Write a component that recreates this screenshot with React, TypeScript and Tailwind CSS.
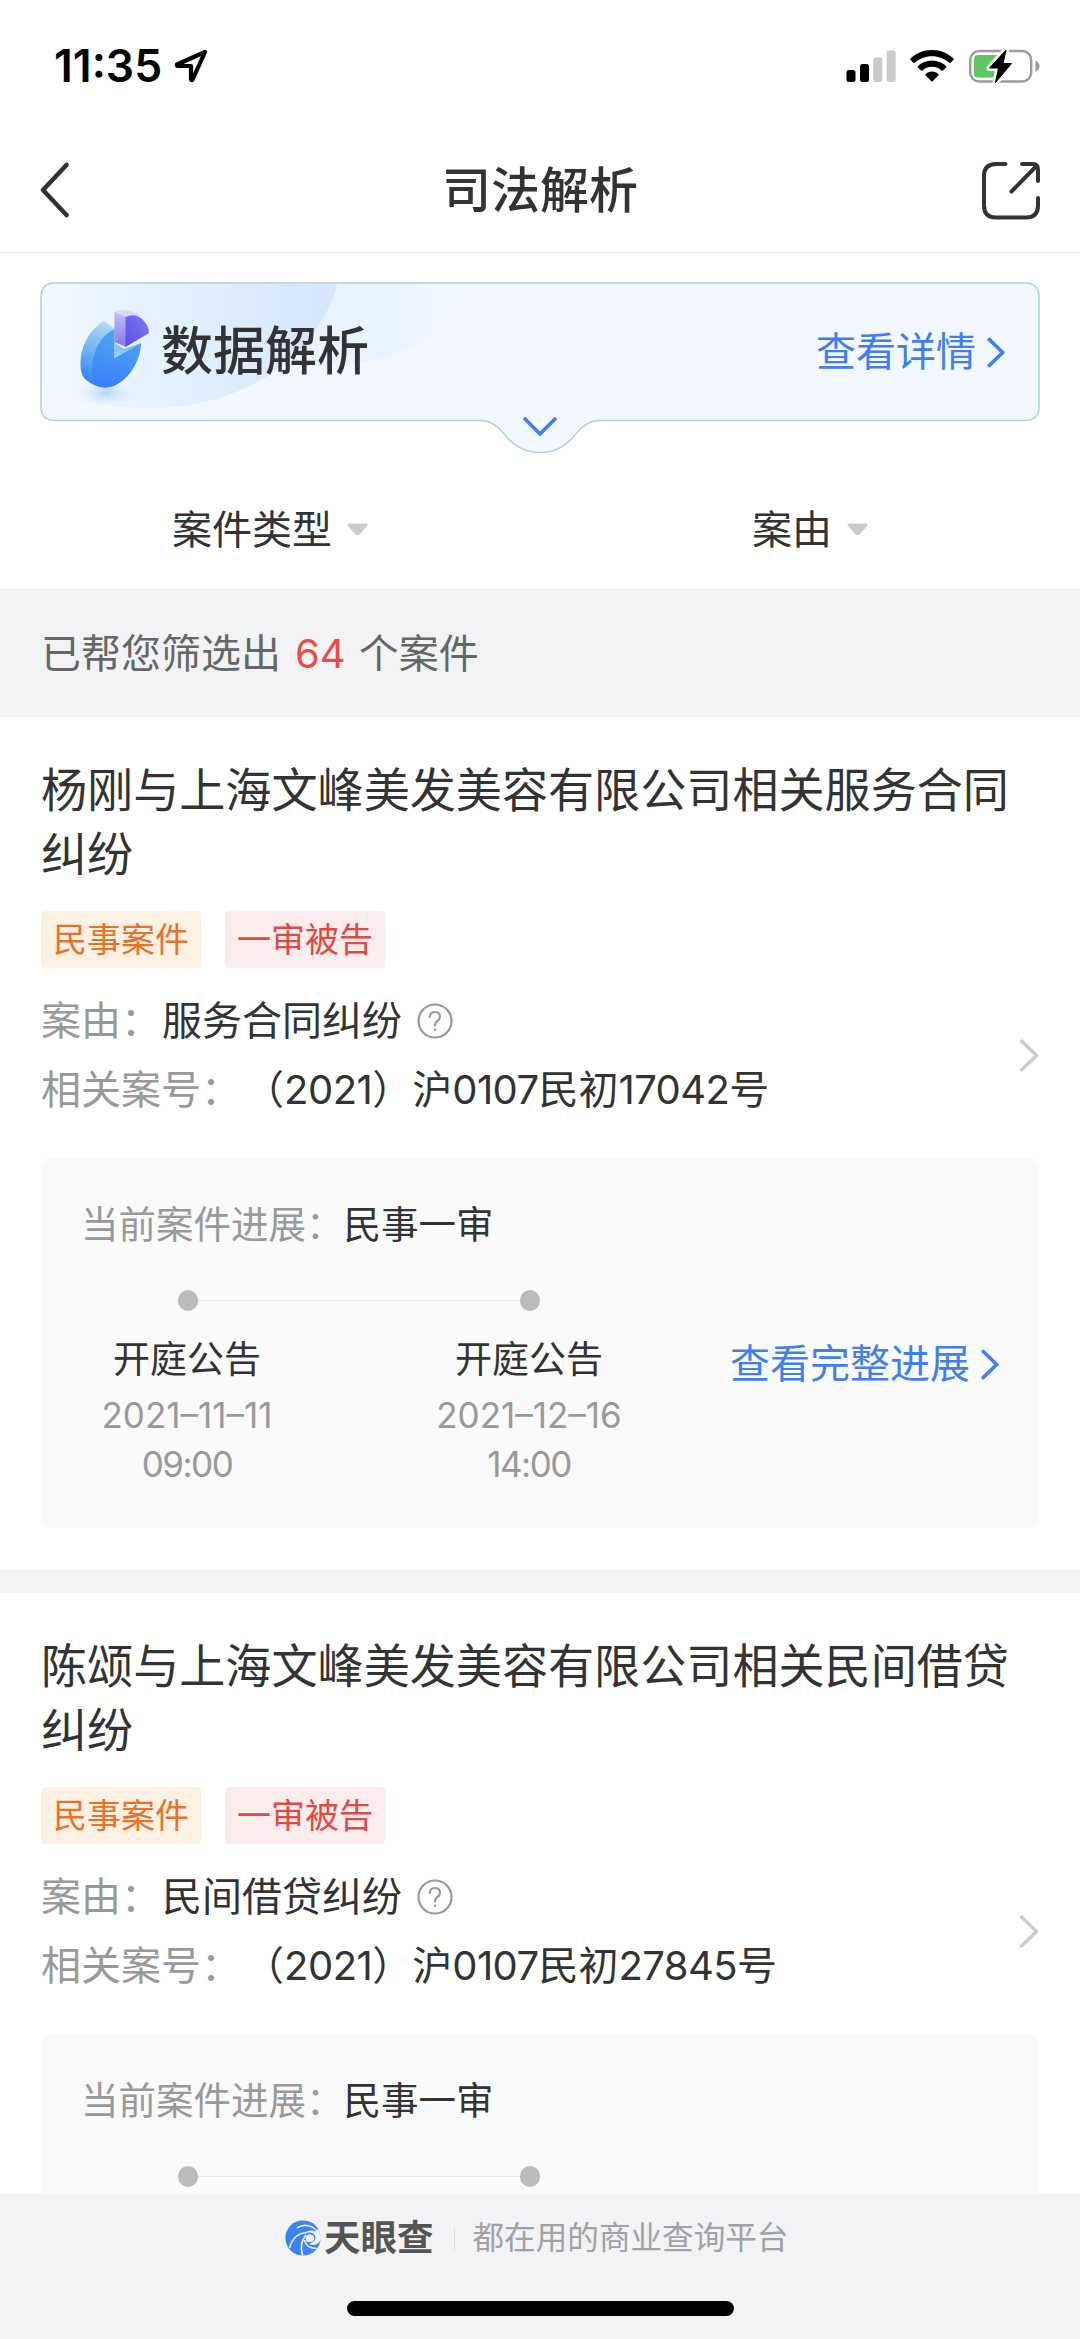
import React from "react";

type Step = { label: string; date: string; time: string };
type Case = { title: string; reason: string; number: [string, string, string, string, string]; steps: Step[] };

const cases: Case[] = [
  {
    title: "杨刚与上海文峰美发美容有限公司相关服务合同纠纷",
    reason: "服务合同纠纷",
    number: ["2021", "沪", "0107", "民初", "17042"],
    steps: [
      { label: "开庭公告", date: "2021–11–11", time: "09:00" },
      { label: "开庭公告", date: "2021–12–16", time: "14:00" },
    ],
  },
  {
    title: "陈颂与上海文峰美发美容有限公司相关民间借贷纠纷",
    reason: "民间借贷纠纷",
    number: ["2021", "沪", "0107", "民初", "27845"],
    steps: [],
  },
];

function Chevron({ className, width = 4 }: { className: string; width?: number }) {
  return (
    <svg viewBox="0 0 20 34" className={className} fill="none" stroke="currentColor" strokeWidth={width} strokeLinecap="round" strokeLinejoin="round">
      <path d="M2.5 2.5 L17.5 17 L2.5 31.5" />
    </svg>
  );
}

function StatusBar() {
  return (
    <div className="flex h-[132px] items-center justify-between pl-[54px] pr-[39px]">
      <div className="flex items-center gap-[12px]">
        <span className="text-[44.500px] font-semibold leading-[44px] text-black">11:35</span>
        <svg viewBox="0 0 34 34" className="h-[34px] w-[34px]" fill="none" stroke="#000" strokeWidth="4.2" strokeLinejoin="round">
          <path d="M31 3 L3 15.5 Q2.5 17 4 17 L17 17 L17 30 Q17.5 32 18.6 30.5 Z" />
        </svg>
      </div>
      <div className="flex items-center">
        <svg viewBox="0 0 50 32" className="h-[32px] w-[50px]">
          <rect x="0.5" y="20" width="9" height="12" rx="2.5" />
          <rect x="14" y="14" width="9" height="18" rx="2.5" />
          <rect x="27.3" y="7.5" width="9" height="24.5" rx="2.5" fill="#cacaca" />
          <rect x="40.7" y="0.5" width="9" height="31.5" rx="2.5" fill="#cacaca" />
        </svg>
        <svg viewBox="0 0 44 32" className="ml-[14px] h-[32px] w-[44px]">
          <path d="M22 0 C30.5 0 38 3.3 43.5 8.6 Q44 9.3 43.4 10 L40.6 12.8 Q40 13.3 39.3 12.8 C34.6 8.6 28.6 6.2 22 6.2 C15.4 6.2 9.4 8.6 4.7 12.8 Q4 13.3 3.4 12.8 L0.6 10 Q0 9.3 0.5 8.6 C6 3.3 13.5 0 22 0 Z" />
          <path d="M22 10.6 C27.5 10.6 32.4 12.7 36 16 Q36.6 16.8 36 17.5 L33 20.4 Q32.3 20.9 31.6 20.4 C29 18.1 25.7 16.8 22 16.8 C18.3 16.8 15 18.1 12.4 20.4 Q11.7 20.9 11 20.4 L8 17.5 Q7.4 16.8 8 16 C11.6 12.7 16.5 10.6 22 10.6 Z" />
          <path d="M22 21.4 C24.5 21.4 26.8 22.3 28.5 23.9 Q29 24.5 28.5 25.2 L22.6 31.2 Q22 31.8 21.4 31.2 L15.5 25.2 Q15 24.5 15.5 23.9 C17.2 22.3 19.5 21.4 22 21.4 Z" />
        </svg>
        <svg viewBox="0 0 72 34" className="ml-[15px] h-[34px] w-[72px]">
          <rect x="1.2" y="2" width="61" height="30.5" rx="9" fill="none" stroke="#9c9c9c" strokeWidth="2.4" />
          <path d="M66.5 11.5 C69.2 12.8 70.5 14.8 70.5 17.2 C70.5 19.6 69.2 21.6 66.5 22.9 Z" fill="#9c9c9c" />
          <rect x="5" y="6" width="27" height="22.5" rx="4" fill="#5fc75f" />
          <path d="M37 1 L20.5 19 L29.5 19 L26.5 33.5 L42.5 14.5 L34 14.5 Z" fill="#000" stroke="#fff" strokeWidth="6" strokeLinejoin="round" />
          <path d="M37 1 L20.5 19 L29.5 19 L26.5 33.5 L42.5 14.5 L34 14.5 Z" fill="#000" stroke="#000" strokeWidth="1" strokeLinejoin="round" />
        </svg>
      </div>
    </div>
  );
}

function NavBar() {
  return (
    <div className="flex h-[121px] items-center justify-between border-b border-[#eeeeee] px-[40px] pb-[6px] pt-[4px]">
      <svg viewBox="0 0 58 58" className="h-[58px] w-[58px]" fill="none" stroke="#333" strokeWidth="4.6" strokeLinecap="round" strokeLinejoin="round">
        <path d="M26.5 3 L3 28 L26.5 53" />
      </svg>
      <h1 className="text-[49px] font-medium leading-[60px] text-[#333]">司法解析</h1>
      <svg viewBox="0 0 58 58" className="h-[58px] w-[58px]" fill="none" stroke="#333" strokeWidth="4" strokeLinecap="round" strokeLinejoin="round">
        <path d="M23.5 2 H14 Q2 2 2 14 V43.500 Q2 55.500 14 55.500 H44 Q56 55.500 56 43.500 V36" />
        <path d="M40 2 H51 Q56 2 56 7.500 V19" />
        <path d="M54.5 4 L29.500 29.500" />
      </svg>
    </div>
  );
}

function PieIcon() {
  return (
    <svg viewBox="0 0 100 120" className="ml-[30px] h-[120px] w-[100px]">
      <defs>
        <linearGradient id="side" x1="0.6" y1="0" x2="0.4" y2="1">
          <stop offset="0" stopColor="#addaf6" />
          <stop offset="0.5" stopColor="#6db2f4" />
          <stop offset="1" stopColor="#2f7df5" />
        </linearGradient>
        <linearGradient id="face" x1="0.6" y1="0" x2="0.4" y2="1">
          <stop offset="0" stopColor="#4fa9f3" />
          <stop offset="1" stopColor="#3a80f8" />
        </linearGradient>
        <linearGradient id="notch" x1="0" y1="1" x2="1" y2="0">
          <stop offset="0" stopColor="#9ad4fb" />
          <stop offset="1" stopColor="#58aef5" />
        </linearGradient>
        <linearGradient id="wedge" x1="0" y1="0" x2="0" y2="1">
          <stop offset="0" stopColor="#c3bdf6" />
          <stop offset="1" stopColor="#8577ee" />
        </linearGradient>
        <linearGradient id="wedgeFace" x1="1" y1="0" x2="0" y2="1">
          <stop offset="0" stopColor="#8878f6" />
          <stop offset="1" stopColor="#5450e4" />
        </linearGradient>
        <radialGradient id="glow">
          <stop offset="0" stopColor="#b5d3fb" />
          <stop offset="1" stopColor="#d5e6fd" stopOpacity="0" />
        </radialGradient>
      </defs>
      <ellipse cx="36" cy="101" rx="26" ry="12" fill="url(#glow)" />
      <path d="M34 29 C20 37 10.500 54 10.500 71 C10.500 82 13 86 19 90 C25 94 29 95.500 36 95.500 L45 37 Z" fill="url(#side)" />
      <path d="M44.500 37 C31 43 22 60 22 78 C22 89 27 95.500 36 95.500 C53 95.500 71 72 71 51 L44.500 66 Z" fill="url(#face)" />
      <path d="M44.500 51 L54 57 L71 51 L44.500 66 Z" fill="url(#notch)" />
      <path d="M44.500 20 Q50 17 58 18.500 Q66 20 70 24 L56 27 Z" fill="#dbd6fa" />
      <path d="M44.500 20 L56 25 V55 L44.500 50 Z" fill="url(#wedge)" />
      <path d="M55.500 25 Q66 20.500 73 28 Q79 34 79 41 L55.500 55 Z" fill="url(#wedgeFace)" />
    </svg>
  );
}

function Banner() {
  const outline =
    "M15 1 H985 Q999 1 999 15 V125 Q999 138.500 985 138.500 H558 Q545 139.500 535 153 Q521 170.500 500 170.500 Q479 170.500 465 153 Q455 139.500 442 138.500 H15 Q1 138.500 1 125 V15 Q1 1 15 1 Z";
  return (
    <div className="relative mx-[40px] mt-[29px] h-[172px]">
      <svg viewBox="0 0 1000 172" className="absolute inset-0 h-full w-full">
        <defs>
          <clipPath id="bannerClip">
            <path d={outline} />
          </clipPath>
          <linearGradient id="big" x1="0" y1="0" x2="1" y2="0">
            <stop offset="0" stopColor="#e6f3fe" stopOpacity="0" />
            <stop offset="0.35" stopColor="#e6f2fe" />
            <stop offset="1" stopColor="#d5e6fd" />
          </linearGradient>
          <linearGradient id="soft" x1="0" y1="0" x2="1" y2="0">
            <stop offset="0" stopColor="#e8f3fe" />
            <stop offset="0.5" stopColor="#eaf4fe" />
            <stop offset="1" stopColor="#f2f8fe" />
          </linearGradient>
        </defs>
        <path d={outline} fill="#f2f8fe" />
        <g clipPath="url(#bannerClip)">
          <path d="M270 0 H445 C420 50 350 84 290 84 H230 Z" fill="url(#soft)" />
          <path d="M0 0 H298 C280 70 210 126 110 126 C80 126 50 122 30 116 L0 110 Z" fill="url(#big)" />
        </g>
        <path d={outline} fill="none" stroke="#b4cfe2" strokeWidth="1.5" />
        <path d="M485 137 L500 152 L515 137" fill="none" stroke="#3f80ee" strokeWidth="3.6" strokeLinecap="round" strokeLinejoin="round" />
      </svg>
      <div className="relative flex h-[140px] items-center">
        <PieIcon />
        <span className="ml-[-9px] text-[52px] font-medium leading-[60px] text-[#333]">数据解析</span>
        <span className="ml-auto text-[40px] leading-[48px] text-[#3f80ee]">查看详情</span>
        <Chevron className="ml-[11px] mr-[35px] h-[31px] w-[18px] text-[#3f80ee]" />
      </div>
    </div>
  );
}

function Triangle() {
  return (
    <svg viewBox="0 0 21 13" className="mb-[2px] h-[13px] w-[21px]">
      <path d="M2 0.5 H19 Q21.5 1 20 3 L12.5 11.5 Q10.5 13 8.5 11.5 L1 3 Q-0.5 1 2 0.5 Z" fill="#cbcbcb" />
    </svg>
  );
}

function Filters() {
  return (
    <div className="grid h-[135px] grid-cols-2 pt-[8px] text-[40px] text-[#333]">
      <div className="flex h-[136px] items-center justify-center gap-[15px]">
        <span className="leading-[48px]">案件类型</span>
        <Triangle />
      </div>
      <div className="flex h-[136px] items-center justify-center gap-[15px]">
        <span className="leading-[48px]">案由</span>
        <Triangle />
      </div>
    </div>
  );
}

function Tag({ children, className }: { children: React.ReactNode; className: string }) {
  return <span className={"flex h-[57px] w-[160px] items-center justify-center rounded-[4px] text-[34px] leading-[40px] " + className}>{children}</span>;
}

function Help() {
  return (
    <svg viewBox="0 0 36 36" className="ml-[15px] h-[36px] w-[36px]" fill="none" stroke="#999" strokeWidth="2.2" strokeLinecap="round">
      <circle cx="18" cy="18" r="16.5" />
      <path d="M12.8 14 Q13 9 18 9 Q23 9 23 13.8 Q23 16.2 20.3 18.2 Q18 20 18 22.6" />
      <circle cx="18" cy="26.8" r="0.7" fill="#999" strokeWidth="1.2" />
    </svg>
  );
}

function Progress({ steps }: { steps: Step[] }) {
  return (
    <div className="mt-[34px] h-[370px] rounded-[12px] bg-[#fafafa] pt-[42px]">
      <div className="flex h-[50px] items-center pl-[40px] text-[37.500px] leading-[50px]">
        <span className="text-[#999]">当前案件进展：</span>
        <span className="text-[#333]">民事一审</span>
      </div>
      <div className="pl-[137px] pt-[40px]">
        <div className="flex h-[21px] w-[362px] items-center">
          <span className="h-[21px] w-[20px] rounded-full bg-[#bbb]" />
          <span className="h-px flex-1 bg-[#e2e2e2]" />
          <span className="h-[21px] w-[20px] rounded-full bg-[#bbb]" />
        </div>
      </div>
      {steps.length > 0 && (
        <div className="flex items-start">
          <div className="-ml-[25px] flex pt-[22px]">
            {steps.map((s) => (
              <div key={s.date} className="flex w-[342px] flex-col items-center">
                <span className="text-[37px] leading-[54px] text-[#333]">{s.label}</span>
                <span className="mt-[4px] text-[35px] leading-[49px] text-[#999]">{s.date}</span>
                <span className="text-[35px] leading-[49px] tracking-[-1.500px] text-[#999]">{s.time}</span>
              </div>
            ))}
          </div>
          <div className="ml-auto mr-[40px] mt-[23px] flex h-[60px] items-center text-[#3f80ee]">
            <span className="text-[40px] leading-[48px]">查看完整进展</span>
            <Chevron className="ml-[11px] h-[31px] w-[18px]" />
          </div>
        </div>
      )}
    </div>
  );
}

function CaseCard({ item }: { item: Case }) {
  const [year, court, code, kind, serial] = item.number;
  return (
    <article className="h-[876px] border-b-[23px] border-[#f1f3f5] bg-white px-[41px] pt-[41px]">
      <h2 className="text-[46.100px] leading-[64px] text-[#333]">{item.title}</h2>
      <div className="mt-[25px] flex gap-[24px]">
        <Tag className="bg-[#fdf1e4] text-[#e8722a]">民事案件</Tag>
        <Tag className="bg-[#fbecee] text-[#e04a43]">一审被告</Tag>
      </div>
      <div className="flex items-center justify-between pt-[18px]">
        <div className="text-[40px] leading-[69px] text-[#333]">
          <div className="flex h-[69px] items-center">
            <span className="text-[#999]">案由：</span>
            <span className="ml-[1px]">{item.reason}</span>
            <Help />
          </div>
          <div className="flex h-[69px]">
            <span className="text-[#999]">相关案号：</span>
            <span className="ml-[3px]">
              （<span className="tracking-[-0.500px]">{year}</span>）{court}
              <span className="tracking-[-0.600px]">{code}</span>
              {kind}
              <span className="tracking-[-0.600px]">{serial}</span>号
            </span>
          </div>
        </div>
        <Chevron className="h-[35px] w-[20px] text-[#ccc]" width={3.4} />
      </div>
      <Progress steps={item.steps} />
    </article>
  );
}

function Logo() {
  return (
    <svg viewBox="0 0 36 36" className="h-[36px] w-[36px]">
      <circle cx="18" cy="18" r="17.6" fill="#3b82f6" />
      <path d="M19 14.500 C24 10.500 31 13 30.500 18.500 C30 21 27 22.500 24.500 23.500 C27 26 31 25.500 34.500 22 L36.500 17 L33 9 L30 11.500 C26 9.500 21 11 19 14.500 Z" fill="#f2f3f5" />
      <path d="M24 14.200 C28 14 30.500 17 28.500 20.500 C26.500 22.500 23 22 21.500 21.500 C20 19 21 15 24 14.200 Z" fill="#f2f3f5" />
      <path d="M4.500 28 C7 19 13 13 22 12.500 M17.500 35.500 C15.500 28 16.500 20 21 15 M19.500 20 C20.500 25 25 28.500 31.500 28.500 M12 8 C18 4 26 4.500 31 10" fill="none" stroke="#f2f3f5" strokeWidth="1.6" />
    </svg>
  );
}

function Footer() {
  return (
    <footer className="flex h-[145px] shrink-0 flex-col items-center bg-[#f2f3f5]">
      <div className="flex h-[88px] w-full items-center pl-[285px]">
        <Logo />
        <span className="ml-[3px] text-[36.500px] font-bold leading-[48px] text-[#555]">天眼查</span>
        <span className="ml-[20px] h-[23px] w-px bg-[#ddd]" />
        <span className="ml-[18px] text-[31.600px] leading-[48px] text-[#a0a2a5]">都在用的商业查询平台</span>
      </div>
      <div className="mt-[19px] h-[15px] w-[387px] rounded-full bg-black" />
    </footer>
  );
}

export default function App() {
  return (
    <div className="flex h-[2339px] w-[1080px] flex-col overflow-hidden bg-white font-['Inter','Noto_Sans_CJK_SC',sans-serif]">
      <StatusBar />
      <NavBar />
      <Banner />
      <Filters />
      <div className="flex h-[128px] items-center border-t border-[#e6e7e9] bg-[#f2f3f5] pl-[41px] pt-px text-[40px] leading-[48px] text-[#666]">
        已帮您筛选出<span className="ml-[14px] mr-[13px] text-[#e84d47]">64</span>个案件
      </div>
      <main className="min-h-0 flex-1 overflow-hidden">
        {cases.map((c) => (
          <CaseCard key={c.title} item={c} />
        ))}
      </main>
      <Footer />
    </div>
  );
}
